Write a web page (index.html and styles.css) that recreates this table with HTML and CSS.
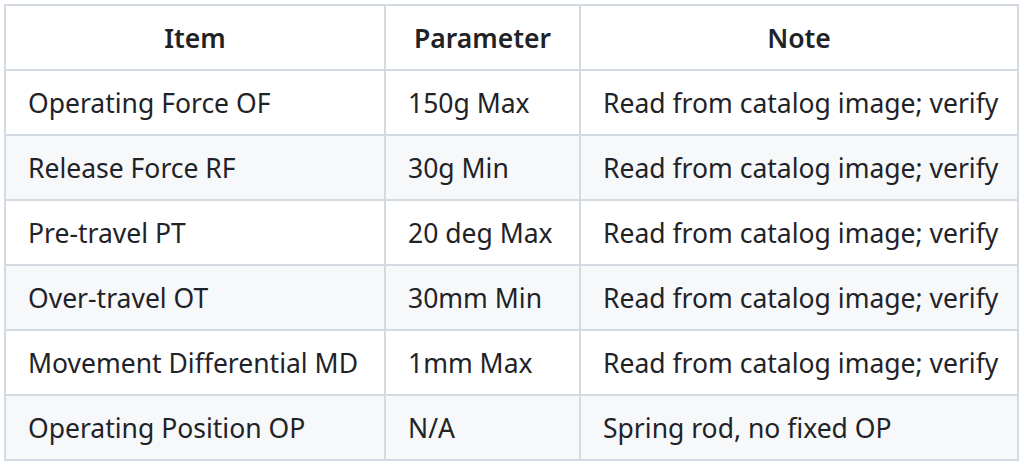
FILE: index.html
```html
<!DOCTYPE html>
<html>
<head>
<meta charset="utf-8">
<link rel="stylesheet" href="styles.css">
</head>
<body>
<div class="wrap">
<table class="spec">
  <colgroup>
    <col class="c1"><col class="c2"><col class="c3">
  </colgroup>
  <thead>
    <tr><th>Item</th><th>Parameter</th><th>Note</th></tr>
  </thead>
  <tbody>
    <tr><td>Operating Force OF</td><td>150g Max</td><td>Read from catalog image; verify</td></tr>
    <tr><td>Release Force RF</td><td>30g Min</td><td>Read from catalog image; verify</td></tr>
    <tr><td>Pre-travel PT</td><td>20 deg Max</td><td>Read from catalog image; verify</td></tr>
    <tr><td>Over-travel OT</td><td>30mm Min</td><td>Read from catalog image; verify</td></tr>
    <tr><td>Movement Differential MD</td><td>1mm Max</td><td>Read from catalog image; verify</td></tr>
    <tr><td>Operating Position OP</td><td>N/A</td><td>Spring rod, no fixed OP</td></tr>
  </tbody>
</table>
</div>
</body>
</html>
```

FILE: styles.css
```css
html, body {
  margin: 0;
  padding: 0;
  background: #ffffff;
}
.wrap {
  padding: 4px 0 0 4px;
}
.spec {
  border-collapse: collapse;
  table-layout: fixed;
  width: 1013px;
  font-family: "Noto Sans", "Open Sans", sans-serif;
  font-size: 26.5px;
  color: #1f2328;
}
.c1 { width: 380px; }
.c2 { width: 195px; }
.c3 { width: 438px; }
.spec th, .spec td {
  border: 2px solid #d3dae2;
  height: 63px;
  padding: 0 22px;
  white-space: nowrap;
  vertical-align: middle;
}
.spec th {
  font-weight: 600;
  text-align: center;
}
.spec td {
  text-align: left;
}
.spec tbody tr:nth-child(even) {
  background: #f6f8fa;
}
```
